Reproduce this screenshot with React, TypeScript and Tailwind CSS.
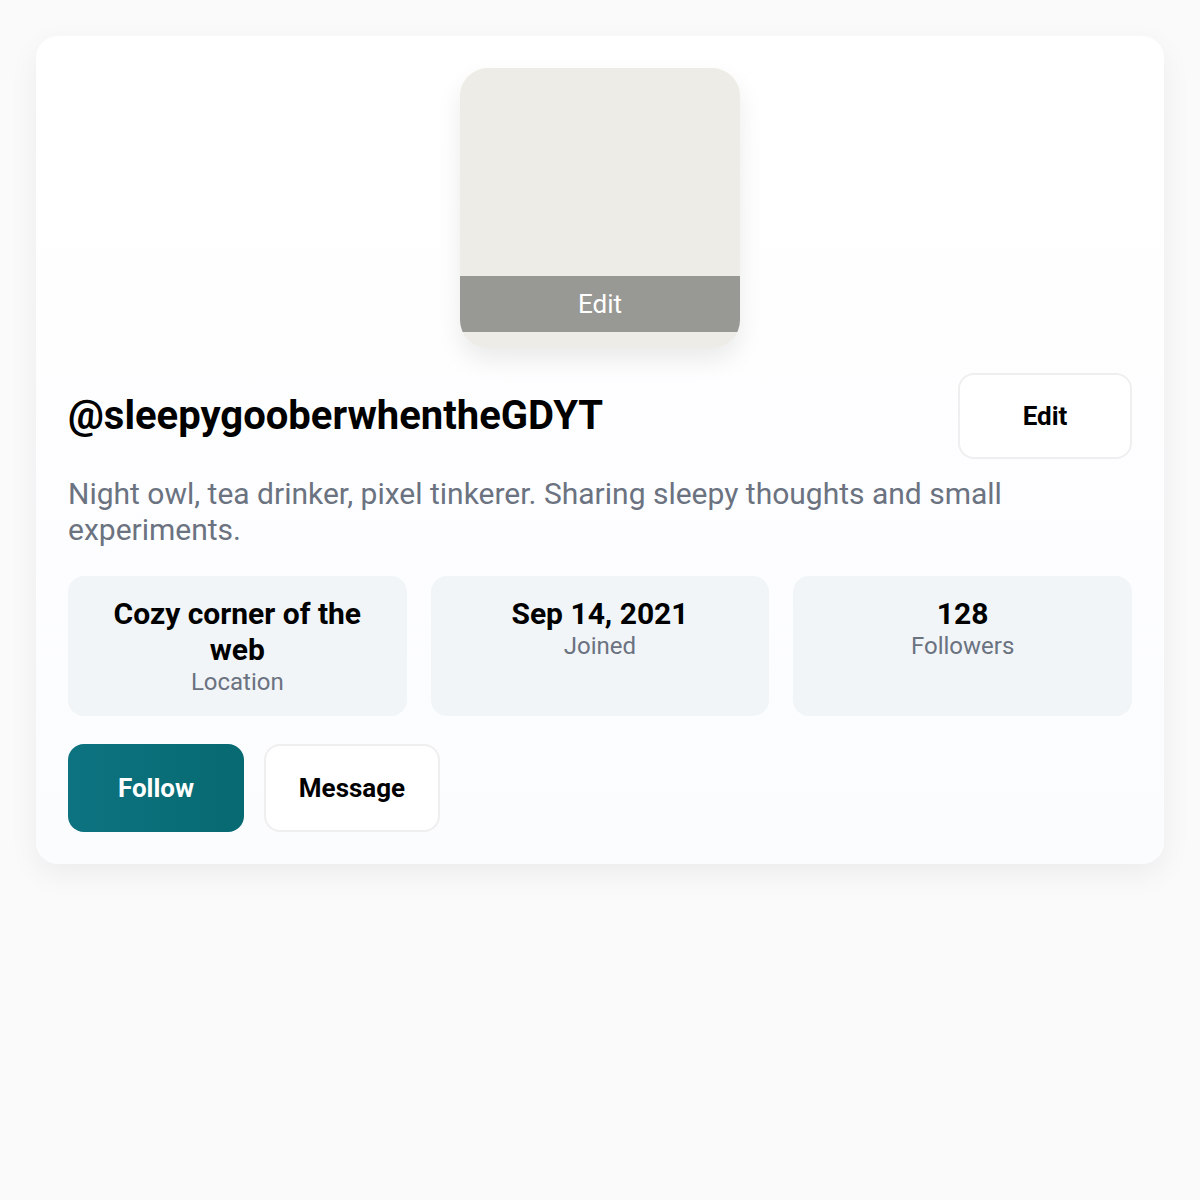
export default function App() {
  const stats = [
    { value: "Cozy corner of the web", label: "Location" },
    { value: "Sep 14, 2021", label: "Joined" },
    { value: "128", label: "Followers" },
  ]

  return (
    <div className="min-h-[1200px] bg-[#fafafa] p-9 font-['Roboto',sans-serif]">
      <div className="rounded-[22px] bg-gradient-to-b from-white to-[#fbfcfe] p-8 shadow-[0_10px_30px_rgba(0,0,0,0.06)]">
        <div className="flex justify-center">
          <div className="relative h-[280px] w-[280px] overflow-hidden rounded-[28px] bg-[#eeece6] shadow-[0_12px_24px_rgba(0,0,0,0.08)]">
            <div className="absolute bottom-4 left-0 right-0 flex h-14 items-center justify-center bg-[#989894] text-[26px] text-white">
              Edit
            </div>
          </div>
        </div>

        <div className="mt-[25px] flex items-center justify-between">
          <h1 className="text-[40px] font-bold leading-none text-black">@sleepygooberwhentheGDYT</h1>
          <button className="h-[86px] w-[174px] rounded-2xl border-2 border-[#efefef] bg-white text-[26px] font-bold text-black">
            Edit
          </button>
        </div>

        <p className="mt-[17px] text-[30px] leading-[36px] text-[#6b7280]">
          Night owl, tea drinker, pixel tinkerer. Sharing sleepy thoughts and small experiments.
        </p>

        <div className="mt-7 grid grid-cols-3 gap-6">
          {stats.map((s) => (
            <div key={s.label} className="h-[140px] rounded-2xl bg-[#f1f5f8] px-10 pt-5 text-center">
              <div className="text-[30px] font-bold leading-[36px] text-black">{s.value}</div>
              <div className="text-[24px] leading-[28px] text-[#6b7280]">{s.label}</div>
            </div>
          ))}
        </div>

        <div className="mt-7 flex gap-5">
          <button className="h-[88px] w-[176px] rounded-2xl bg-gradient-to-r from-[#0d7380] to-[#076a72] text-[26px] font-bold text-white">
            Follow
          </button>
          <button className="h-[88px] w-[176px] rounded-2xl border-2 border-[#efefef] bg-white text-[26px] font-bold text-black">
            Message
          </button>
        </div>
      </div>
    </div>
  )
}
